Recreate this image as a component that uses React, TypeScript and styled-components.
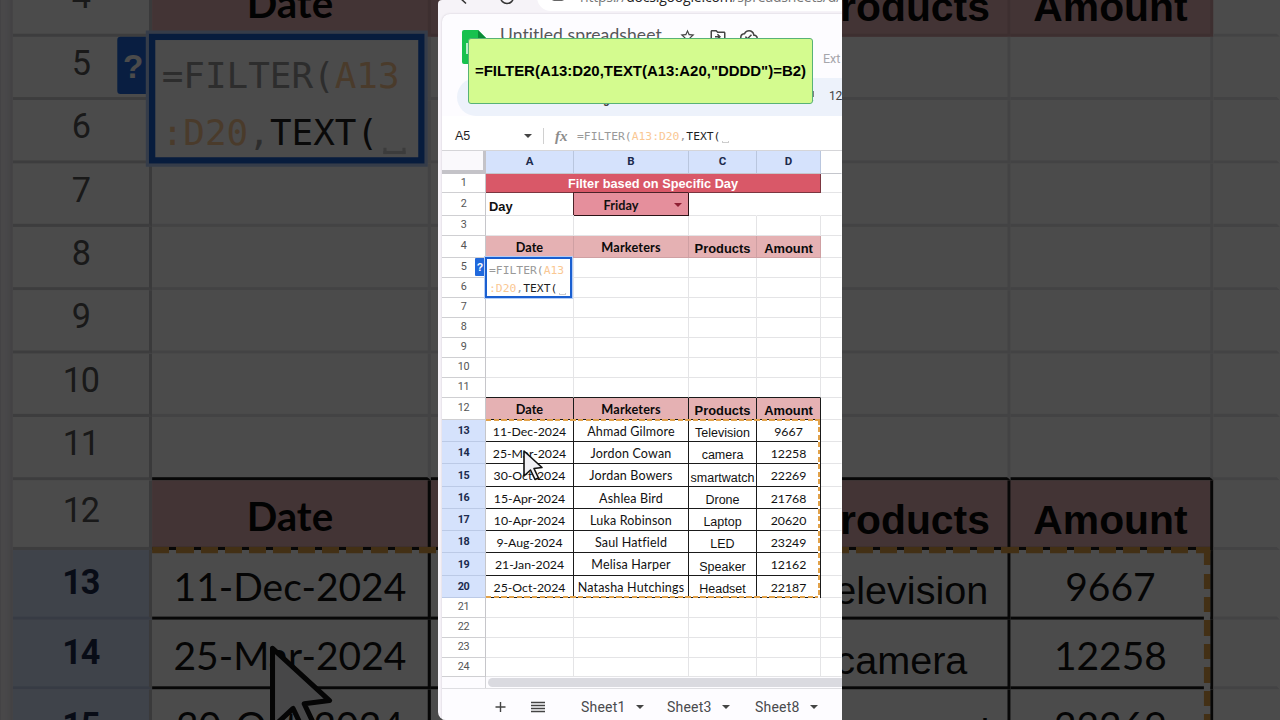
import React from "react";
import styled, { createGlobalStyle, css } from "styled-components";
import { MdStarBorder, MdOutlineDriveFileMove, MdOutlineCloudDone } from "react-icons/md";

const GlobalStyle = createGlobalStyle`
  *, *::before, *::after { box-sizing: border-box; }
  html, body { margin: 0; padding: 0; overflow: hidden; background: #4a4a4a; }
`;

const sans = `"Liberation Sans", Arial, sans-serif`;
const humanist = `Lato, Carlito, Calibri, sans-serif`;
const ui = `Roboto, "Liberation Sans", sans-serif`;
const mono = `"DejaVu Sans Mono", "Liberation Mono", monospace`;

const Stage = styled.main`
  position: relative;
  width: 1280px;
  height: 720px;
  overflow: hidden;
  display: flex;
  justify-content: center;
  background: #000;
`;

const Backdrop = styled.div`
  position: absolute;
  left: 438px;
  top: 0;
  width: 404px;
  height: 720px;
  transform: scale(3.168);
`;

const Dim = styled.div`
  position: absolute;
  inset: 0;
  background: rgba(0, 0, 0, 0.705);
`;

const Foreground = styled.div`
  position: relative;
  width: 404px;
  height: 720px;
  overflow: hidden;
  border-radius: 4px 0 0 8px;
`;

const Window = styled.div`
  position: relative;
  width: 404px;
  height: 720px;
  overflow: hidden;
  display: flex;
  flex-direction: column;
  background: #f6f3f8;
`;

const BrowserBar = styled.div`
  height: 14px;
  flex: none;
  display: flex;
  align-items: flex-start;
  padding-left: 18px;
  overflow: hidden;
`;

const BrowserIcon = styled.svg<{ $gap: number }>`
  flex: none;
  width: 14px;
  height: 14px;
  margin-top: -9px;
  margin-right: ${(p) => p.$gap}px;
  overflow: visible;
  fill: none;
  stroke: #333;
  stroke-width: 1.5;
`;

const AddressPill = styled.div`
  margin-top: -19px;
  height: 30px;
  width: 330px;
  flex: none;
  border-radius: 14px;
  background: #fff;
  display: flex;
  align-items: center;
  padding-left: 14px;
  white-space: nowrap;
  font: 14px "Open Sans", "Noto Sans", sans-serif;
  color: #777;
  letter-spacing: -0.2px;
`;

const LockIcon = styled.svg`
  width: 14px;
  height: 14px;
  margin-right: 15px;
  fill: none;
  stroke: #666;
  flex: none;
`;

const Host = styled.span`
  color: #222;
`;

const Page = styled.div`
  flex: 1;
  margin-left: 4px;
  border-top-left-radius: 8px;
  background: #fdfcff;
  box-shadow: 0 0 2px rgba(80, 70, 90, 0.25);
  display: flex;
  flex-direction: column;
  overflow: hidden;
`;

const DocHeader = styled.div`
  height: 64px;
  flex: none;
  display: flex;
  align-items: flex-start;
  padding: 12px 0 0 20px;
`;

const Logo = styled.svg`
  width: 24px;
  height: 36px;
  flex: none;
  margin-top: 4px;
`;

const DocTitle = styled.div`
  margin-left: 14px;
  width: 174px;
  flex: none;
  font: 17.5px/22px ${humanist};
  color: #555659;
  white-space: nowrap;
  letter-spacing: 0.1px;
  margin-top: -2px;
`;

const DocActions = styled.div`
  display: flex;
  align-items: center;
  gap: 13px;
  color: #444;
  margin: 1px 0 0 5px;
`;

const MenuHint = styled.div`
  font: 12.5px/16px ${ui};
  color: #a6a6ab;
  margin: 25px 0 0 65px;
  white-space: nowrap;
`;

const ToolbarPill = styled.div`
  height: 38px;
  flex: none;
  margin-left: 15px;
  border-radius: 19px 0 0 19px;
  background: #edf2fb;
  display: flex;
  align-items: center;
  padding-left: 146px;
  font: 12px/20px ${ui};
  color: #444;
  white-space: nowrap;
  overflow: hidden;
`;

const ToolbarDescender = styled.span`
  width: 206px;
  flex: none;
  font-weight: 700;
  padding-top: 4px;
`;

const DecimalIcon = styled.svg`
  width: 6px;
  height: 14px;
  flex: none;
  fill: none;
  stroke: #333;
  stroke-width: 1.2;
`;

const NumberFormat = styled.span`
  margin-left: 14px;
  margin-top: -2px;
  font-size: 12px;
  letter-spacing: -0.3px;
`;

const FormulaBar = styled.div`
  height: 34px;
  flex: none;
  display: flex;
  align-items: center;
  padding: 6px 0 0 13px;
  background: #fff;
`;

const NameBox = styled.div`
  width: 69px;
  font: 12.5px/16px ${sans};
  color: #1f1f1f;
`;

const Caret = styled.i<{ $size?: number; $color?: string }>`
  width: 0;
  height: 0;
  flex: none;
  border: ${(p) => p.$size ?? 4}px solid transparent;
  border-bottom: 0;
  border-top-color: ${(p) => p.$color ?? "#444"};
`;

const Separator = styled.div`
  width: 1px;
  height: 16px;
  margin: 0 11px 0 11px;
  background: #d0d0d0;
`;

const FxLabel = styled.div`
  width: 22px;
  font: italic 700 15px/16px "Liberation Serif", serif;
  color: #8c8c8c;
`;

const Code = styled.div`
  font: 11.35px/17.6px ${mono};
  color: #999;
  white-space: nowrap;
  padding-top: 1px;
`;

const RangeRef = styled.span`
  color: #fac893;
`;

const Fn = styled.span`
  color: #1f1f1f;
`;

const Slot = styled.span`
  display: inline-block;
  width: 7px;
  height: 2px;
  margin-left: 2px;
  vertical-align: -3px;
  border: 1px solid #cdcdcd;
  border-top: 0;
`;

const Sheet = styled.div`
  position: relative;
  flex: none;
  background: #fff;
`;

const columns = "44px 88px 115px 68px 64px 21px";

const HeadRow = styled.div`
  display: grid;
  grid-template-columns: ${columns};
  height: 24px;
  border-top: 1px solid #d5d5d8;
`;

const Corner = styled.div`
  background: #faf9fc;
  border-right: 3px solid #c4c3c8;
  border-bottom: 4px solid #c4c3c8;
`;

const ColumnHead = styled.div<{ $selected?: boolean }>`
  display: flex;
  align-items: center;
  justify-content: center;
  padding-bottom: 2px;
  font: 700 11.5px/14px ${ui};
  color: #1c2b4d;
  background: ${(p) => (p.$selected ? "#d5e2fc" : "#fff")};
  border-right: 1px solid ${(p) => (p.$selected ? "#b9c6de" : "transparent")};
  border-bottom: 1px solid #c4c6cc;
`;

const Row = styled.div<{ $height: number }>`
  display: grid;
  grid-template-columns: ${columns};
  height: ${(p) => p.$height}px;
`;

const RowHead = styled.div<{ $selected?: boolean }>`
  display: flex;
  align-items: center;
  justify-content: center;
  padding-top: ${(p) => (p.$selected ? 1.6 : 0)}px;
  padding-bottom: ${(p) => (p.$selected ? 0 : 0.8)}px;
  font: ${(p) => (p.$selected ? 700 : 400)} 10.8px/14px ${ui};
  letter-spacing: -0.35px;
  color: ${(p) => (p.$selected ? "#1c2b4d" : "#555")};
  background: ${(p) => (p.$selected ? "#d5e2fc" : "#fff")};
  border-right: 1px solid #c6c6ca;
  border-bottom: 1px solid ${(p) => (p.$selected ? "#bccae6" : "#cfcfd2")};
`;

type CellKind = "blank" | "open" | "title" | "label" | "picker" | "heading" | "data";

const fills: Record<CellKind, string> = {
  blank: "#fff",
  open: "#fff",
  title: "#d95868",
  label: "#fff",
  picker: "#e58f9c",
  heading: "#e5b1b3",
  data: "#fff",
};

const Cell = styled.div<{
  $kind: CellKind;
  $dark?: boolean;
  $floor?: boolean;
  $arial?: boolean;
  $wide?: boolean;
  $span?: number;
}>`
  position: relative;
  display: flex;
  align-items: center;
  justify-content: ${(p) => (p.$kind === "label" ? "flex-start" : "center")};
  min-width: 0;
  white-space: nowrap;
  grid-column: span ${(p) => p.$span ?? 1};
  color: #111;
  background: ${(p) => fills[p.$kind]};
  font: 400 ${(p) => (p.$arial ? 12.5 : p.$wide ? 12.5 : 12.3)}px/16px ${(p) => (p.$arial ? sans : humanist)};
  letter-spacing: ${(p) => (p.$wide ? 0.17 : 0)}px;
  border-right: 1px solid ${(p) => (p.$dark ? "#1a1a1a" : "#e4e4e6")};
  border-bottom: 1px solid ${(p) => (p.$dark || p.$floor ? "#1a1a1a" : "#e4e4e6")};
  padding-top: ${(p) => (p.$arial ? 5 : 2.6)}px;

  ${(p) =>
    p.$kind === "heading" &&
    css`
      font-weight: 700;
      font-size: ${p.$arial ? 12.9 : 12.7}px;
      padding-top: ${p.$arial ? 5 : 1}px;
      color: #0a0a0a;
      ${!p.$dark && "border-color: #cfa0a3;"}
    `}
  ${(p) =>
    p.$kind === "title" &&
    css`
      font-weight: 700;
      font-size: 12.75px;
      color: #fff;
      border-color: #7b3640;
      padding-top: 2px;
    `}
  ${(p) =>
    p.$kind === "label" &&
    css`
      font-weight: 700;
      font-size: 12.9px;
      padding-left: 3px;
      padding-top: 5px;
    `}
  ${(p) =>
    p.$kind === "picker" &&
    css`
      font-weight: 700;
      font-size: 12.7px;
      padding-right: 20px;
      border-color: #2c1216;
      box-shadow: -1px -1px 0 #4a2228;
    `}
  ${(p) => p.$kind === "open" && "border-right-color: transparent;"}
`;

const PickerCaret = styled(Caret)`
  position: absolute;
  right: 6px;
  top: 10px;
`;

const Editor = styled.div`
  position: absolute;
  left: 43px;
  top: 107px;
  width: 87px;
  height: 41px;
  padding: 2px 0 0 2px;
  background: #fff;
  border: 2px solid #1a5fd0;
  box-shadow: 0 0 0 1px #b4cdf7;
`;

const HelpBadge = styled.div`
  position: absolute;
  left: 33px;
  top: 108px;
  width: 10px;
  height: 18px;
  display: flex;
  align-items: center;
  justify-content: center;
  border-radius: 1px;
  background: #2068dc;
  color: #fff;
  font: 700 10.5px/12px ${sans};
`;

const MarchTop = styled.div`
  position: absolute;
  left: 44px;
  top: 269px;
  width: 334px;
  height: 2px;
  background: repeating-linear-gradient(90deg, #e2a24a 0 5.4px, transparent 5.4px 7.66px);
`;

const MarchBottom = styled(MarchTop)`
  top: 446px;
`;

const MarchRight = styled.div`
  position: absolute;
  left: 376px;
  top: 270px;
  width: 2px;
  height: 178px;
  background: repeating-linear-gradient(180deg, #e2a24a 0 4.8px, #fff 4.8px 7.4px);
`;

const Pointer = styled.svg`
  position: absolute;
  left: 80px;
  top: 299px;
  width: 22px;
  height: 33px;
  fill: #f1f1f5;
  stroke: #111;
  stroke-width: 1.6;
  stroke-linejoin: round;
`;

const ScrollTrack = styled.div`
  height: 12px;
  flex: none;
  display: flex;
  background: #fdfcff;
  border-bottom: 1px solid #dedee2;
`;

const ScrollGutter = styled.div`
  width: 44px;
  border-right: 1px solid #d4d4d8;
`;

const ScrollThumb = styled.div`
  flex: 1;
  height: 9px;
  margin: 1px 0 0 2px;
  border-radius: 5px 0 0 5px;
  background: #dadae0;
`;

const Tabs = styled.div`
  height: 31px;
  flex: none;
  display: flex;
  align-items: center;
  padding: 5px 0 0 52px;
  color: #444;
`;

const TabIcon = styled.svg<{ $gap: number }>`
  width: 14px;
  height: 14px;
  flex: none;
  margin-right: ${(p) => p.$gap}px;
  fill: none;
  stroke: #444;
  stroke-width: 1.4;
`;

const Tab = styled.div<{ $width: number }>`
  width: ${(p) => p.$width}px;
  flex: none;
  display: flex;
  align-items: center;
  gap: 10.5px;
  font: 400 14px/18px ${ui};
  letter-spacing: 0.2px;
  color: #4a4a4d;
`;

const Banner = styled.div`
  position: absolute;
  left: 30px;
  top: 38px;
  width: 345px;
  height: 66px;
  display: flex;
  align-items: center;
  justify-content: center;
  border: 1px solid #58b276;
  border-radius: 3px;
  background: #d4fb8f;
  color: #000;
  font: 700 14.95px/20px ${sans};
  white-space: nowrap;
`;

type Line = {
  n: number;
  h: number;
  cells?: string[];
  kind?: "title" | "day" | "heading" | "data";
  dark?: boolean;
  floor?: boolean;
};

const lines: Line[] = [
  { n: 1, h: 19, kind: "title" },
  { n: 2, h: 23, kind: "day" },
  { n: 3, h: 20 },
  { n: 4, h: 22, kind: "heading", cells: ["Date", "Marketers", "Products", "Amount"] },
  { n: 5, h: 20 },
  { n: 6, h: 20 },
  { n: 7, h: 20 },
  { n: 8, h: 20 },
  { n: 9, h: 20 },
  { n: 10, h: 20 },
  { n: 11, h: 20, floor: true },
  { n: 12, h: 22, kind: "heading", dark: true, cells: ["Date", "Marketers", "Products", "Amount"] },
  { n: 13, h: 22, kind: "data", dark: true, cells: ["11-Dec-2024", "Ahmad Gilmore", "Television", "9667"] },
  { n: 14, h: 22, kind: "data", dark: true, cells: ["25-Mar-2024", "Jordon Cowan", "camera", "12258"] },
  { n: 15, h: 23, kind: "data", dark: true, cells: ["30-Oct-2024", "Jordan Bowers", "smartwatch", "22269"] },
  { n: 16, h: 22, kind: "data", dark: true, cells: ["15-Apr-2024", "Ashlea Bird", "Drone", "21768"] },
  { n: 17, h: 22, kind: "data", dark: true, cells: ["10-Apr-2024", "Luka Robinson", "Laptop", "20620"] },
  { n: 18, h: 22, kind: "data", dark: true, cells: ["9-Aug-2024", "Saul Hatfield", "LED", "23249"] },
  { n: 19, h: 23, kind: "data", dark: true, cells: ["21-Jan-2024", "Melisa Harper", "Speaker", "12162"] },
  { n: 20, h: 22, kind: "data", dark: true, cells: ["25-Oct-2024", "Natasha Hutchings", "Headset", "22187"] },
  { n: 21, h: 20 },
  { n: 22, h: 20 },
  { n: 23, h: 20 },
  { n: 24, h: 19 },
];

function RowCells({ line }: { line: Line }) {
  if (line.kind === "title") {
    return (
      <Cell $kind="title" $arial $span={4}>
        Filter based on Specific Day
      </Cell>
    );
  }
  if (line.kind === "day") {
    return (
      <>
        <Cell $kind="label" $arial>Day</Cell>
        <Cell $kind="picker">
          Friday
          <PickerCaret $color="#8f1f33" />
        </Cell>
        <Cell $kind="open" />
        <Cell $kind="open" />
      </>
    );
  }
  return (
    <>
      {[0, 1, 2, 3].map((i) => (
        <Cell
          key={i}
          $kind={line.kind ?? "blank"}
          $dark={line.dark}
          $floor={line.floor}
          $wide={i === 1}
          $arial={i === 2 || (i === 3 && line.kind === "heading")}
        >
          {line.cells?.[i]}
        </Cell>
      ))}
    </>
  );
}

function SpreadsheetWindow() {
  return (
    <Window>
      <BrowserBar>
        <BrowserIcon viewBox="0 0 14 14" $gap={30}>
          <path d="M9 0 3 6l7 6.500" />
        </BrowserIcon>
        <BrowserIcon viewBox="0 0 14 14" $gap={23}>
          <circle cx="7" cy="6" r="6.500" />
        </BrowserIcon>
        <AddressPill>
          <LockIcon viewBox="0 0 14 14">
            <rect x="1.500" y="2" width="11" height="9.500" rx="1" />
          </LockIcon>
          https://<Host>docs.google.com</Host>/spreadsheets/d/1b
        </AddressPill>
      </BrowserBar>
      <Page>
        <DocHeader>
          <Logo viewBox="0 0 24 36">
            <path d="M2 0h14l8 8v26H2a2 2 0 0 1-2-2V2a2 2 0 0 1 2-2z" fill="#17c14e" />
            <path d="M16 0l8 8h-8z" fill="#0b8a38" />
            <path d="M4 13h16v11H4z" fill="#b9efc9" />
          </Logo>
          <DocTitle>Untitled spreadsheet</DocTitle>
          <DocActions>
            <MdStarBorder size={17} />
            <MdOutlineDriveFileMove size={18} />
            <MdOutlineCloudDone size={18} />
          </DocActions>
          <MenuHint>Ext</MenuHint>
        </DocHeader>
        <ToolbarPill>
          <ToolbarDescender>g</ToolbarDescender>
          <DecimalIcon viewBox="0 0 6 14">
            <path d="M4 1v6M1 12l3-2" />
          </DecimalIcon>
          <NumberFormat>123</NumberFormat>
        </ToolbarPill>
        <FormulaBar>
          <NameBox>A5</NameBox>
          <Caret />
          <Separator />
          <FxLabel>fx</FxLabel>
          <Code>
            =FILTER(<RangeRef>A13:D20</RangeRef>,<Fn>TEXT(</Fn>
            <Slot />
          </Code>
        </FormulaBar>
        <Sheet>
          <HeadRow>
            <Corner />
            {["A", "B", "C", "D"].map((c) => (
              <ColumnHead key={c} $selected>
                {c}
              </ColumnHead>
            ))}
            <ColumnHead />
          </HeadRow>
          {lines.map((line) => (
            <Row key={line.n} $height={line.h}>
              <RowHead $selected={line.kind === "data"}>{line.n}</RowHead>
              <RowCells line={line} />
              <Cell $kind="open" />
            </Row>
          ))}
          <HelpBadge>?</HelpBadge>
          <Editor>
            <Code>
              =FILTER(<RangeRef>A13</RangeRef>
              <br />
              <RangeRef>:D20</RangeRef>,<Fn>TEXT(</Fn>
              <Slot />
            </Code>
          </Editor>
          <MarchTop />
          <MarchBottom />
          <MarchRight />
          <Pointer viewBox="0 0 22 33">
            <path d="M2 2l18 16.500-8 1 4.500 9.500-3.500 1.500-4.500-9.500L2 27z" />
          </Pointer>
        </Sheet>
        <ScrollTrack>
          <ScrollGutter />
          <ScrollThumb />
        </ScrollTrack>
        <Tabs>
          <TabIcon viewBox="0 0 14 14" $gap={23}>
            <path d="M6.500 2v10M1.500 7h10" />
          </TabIcon>
          <TabIcon viewBox="0 0 14 14" $gap={36}>
            <path d="M0 2.500h14M0 5.500h14M0 8.500h14M0 11.500h14" />
          </TabIcon>
          <Tab $width={86}>Sheet1 <Caret /></Tab>
          <Tab $width={88}>Sheet3 <Caret /></Tab>
          <Tab $width={80}>Sheet8 <Caret /></Tab>
        </Tabs>
      </Page>
    </Window>
  );
}

export default function App() {
  return (
    <>
      <GlobalStyle />
      <Stage>
        <Backdrop aria-hidden>
          <SpreadsheetWindow />
        </Backdrop>
        <Dim />
        <Foreground>
          <SpreadsheetWindow />
          <Banner>=FILTER(A13:D20,TEXT(A13:A20,"DDDD")=B2)</Banner>
        </Foreground>
      </Stage>
    </>
  );
}
